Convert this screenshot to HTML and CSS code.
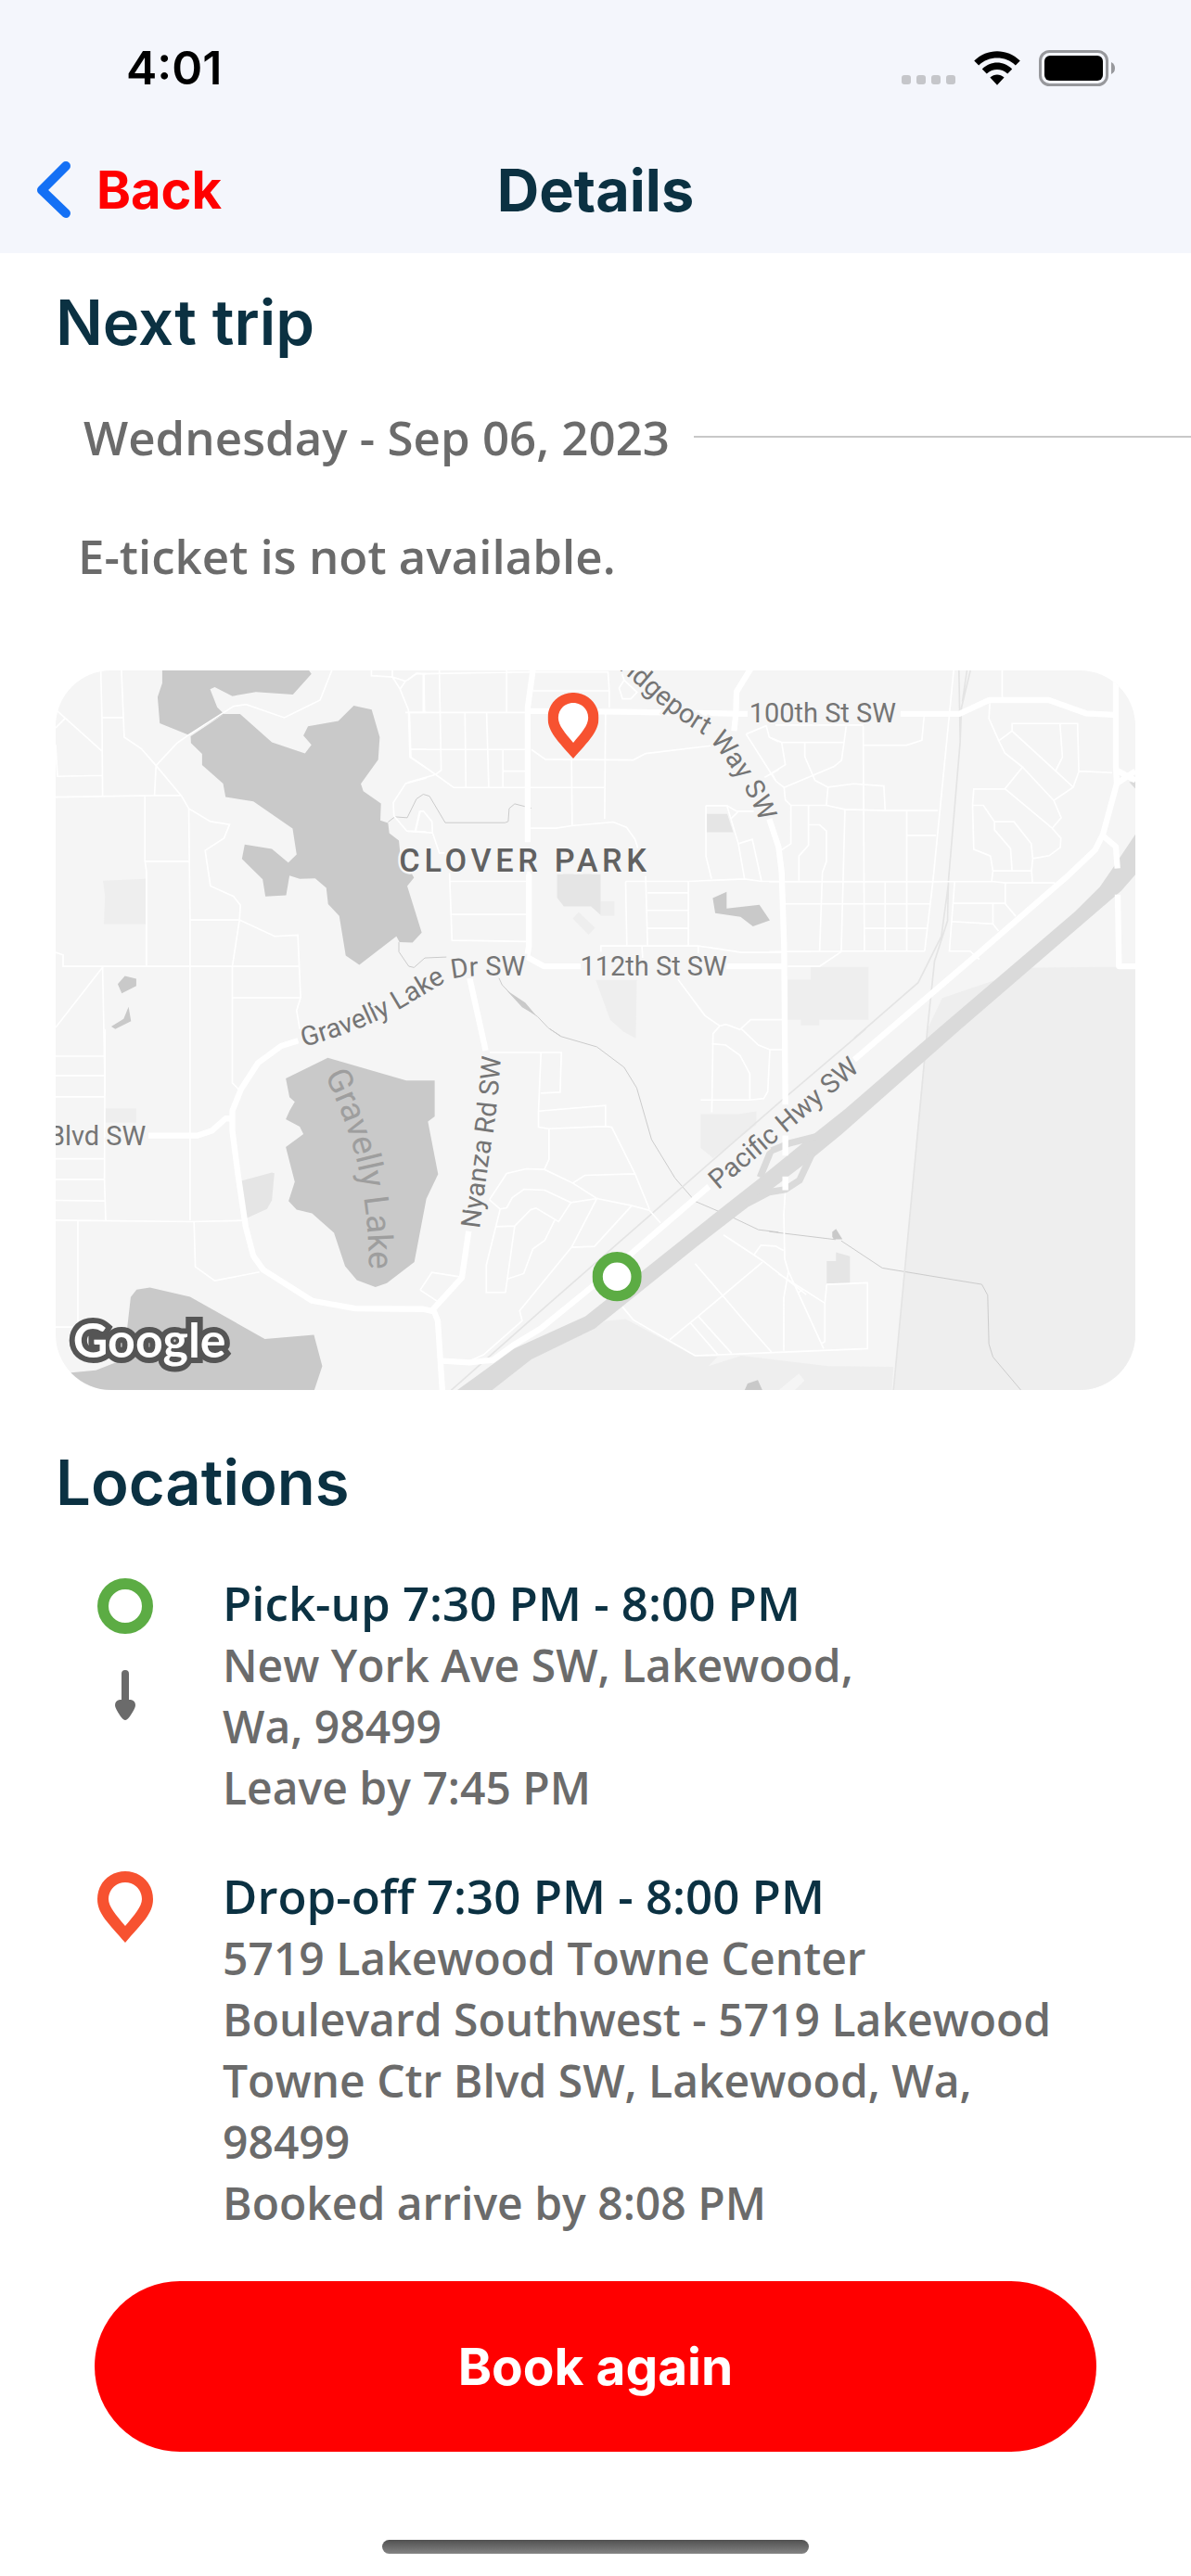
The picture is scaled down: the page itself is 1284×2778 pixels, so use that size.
FILE: index.html
```html
<!DOCTYPE html>
<html lang="en">
<head>
<meta charset="utf-8">
<meta name="viewport" content="width=device-width, initial-scale=1">
<title>Details</title>
<link rel="stylesheet" href="styles.css">
</head>
<body>
<header class="topbar">
  <div class="status">
    <time class="clock">4:01</time>
    <div class="status-icons">
      <svg class="icon-dots" viewBox="0 0 58 10" aria-hidden="true"><g fill="#c5c6ca"><rect width="10" height="10" rx="3"/><rect x="16" width="10" height="10" rx="3"/><rect x="32" width="10" height="10" rx="3"/><rect x="48" width="10" height="10" rx="3"/></g></svg>
      <svg class="icon-wifi" viewBox="0 0 150 112" aria-hidden="true"><path d="M0 32C42-10 108-10 150 32L135 47C102 15 48 15 15 47ZM26 59C54 31 96 31 124 59L109 74C89 56 61 56 41 74ZM52 86C66 74 84 74 98 86L75 111Z"/></svg>
      <svg class="icon-battery" viewBox="0 0 82 39" aria-hidden="true"><rect x="1.500" y="1.500" width="72" height="36" rx="10" fill="none" stroke="#97989c" stroke-width="3"/><rect x="6" y="6" width="63" height="27" rx="6"/><path d="M78 13Q82 15 82 19.500T78 26Z" fill="#97989c"/></svg>
    </div>
  </div>
  <nav class="nav">
    <a class="back" href="#"><svg class="icon-back" viewBox="0 0 36 62" aria-hidden="true"><path d="M31 5L5 31L31 56" fill="none" stroke="#1470f5" stroke-width="10" stroke-linecap="round" stroke-linejoin="round"/></svg>Back</a>
    <h1 class="title">Details</h1>
  </nav>
</header>

<main class="content">
  <h2 class="heading">Next trip</h2>
  <div class="date-row"><p class="date">Wednesday - Sep 06, 2023</p><span class="rule"></span></div>
  <p class="notice">E-ticket is not available.</p>

  <svg class="map" viewBox="0 0 3495 2331" role="img" aria-label="Map of the trip">
    <defs>
      <path id="p-gravelly" d="M-338 1228Q-160 1180-30 1108Q60 1055 130 1012Q170 998 240 998L420 998"/>
      <path id="p-bridge" d="M560-90Q680 0 760 70Q850 155 965 222Q1090 360 1140 500"/>
      <path id="p-nyanza" d="M232 648Q258 440 274 350T304 50"/>
      <path id="p-lake" d="M870 150Q960 330 990 500T1012 850"/>
      <path id="p-pacific" d="M1005 522L1510 94"/>
      <symbol id="pin" viewBox="0 0 165 213"><path fill="#f75230" d="M82.500 0C36 0 0 36 0 81C0 126 32 156 82.500 213C133 156 165 126 165 81C165 36 129 0 82.500 0Z"/><path fill="#fff" d="M82.500 33C55 33 34 54 34 81C34 106 56 130 82.500 162C109 130 131 106 131 81C131 54 110 33 82.500 33Z"/></symbol>
      <symbol id="ring" viewBox="0 0 160 160"><circle cx="80" cy="80" r="63" fill="#fff" stroke="#5cac44" stroke-width="34"/></symbol>
    </defs>
    <rect width="3495" height="2331" fill="#f5f5f5"/>

    <!-- parks and built-up areas -->
    <g fill="#eee">
      <path transform="translate(0 -9)" d="M153 690L292 684V830H156L160 740Z"/>
      <path transform="translate(1140 -9)" d="M624 757h45v46h-45zM553 792L606 842L585 865L534 812ZM608 1011H741L738 1200L700 1180L655 1140Z"/>
      <path transform="translate(2310 -9)" d="M60 1010h74v-41h187v171h-159v18h-60v-18H60z"/>
      <path transform="translate(0 1161)" d="M160 258h101v45H160z"/>
      <path transform="translate(1140 1161)" d="M948 276H1070L1128 267V310L988 418L948 385ZM600 970L640 945L705 939L930 1060L1002 1062L973 1092L1080 1058L1360 1092L1572 1094L1566 1180H260L400 1070Z"/>
      <path transform="translate(2310 1161)" d="M560-100L850-199L1200-202V1180H402L500 100L512 0Z"/>
    </g>
    <g fill="#e5e5e5">
      <path transform="translate(1140 -9)" d="M483 668H624V801L593 773H505L483 745ZM968 474H1034L1053 533H968Z"/>
      <path transform="translate(0 1161)" d="M600 492L700 465L708 467L700 555L684 583L615 614Z"/>
      <path transform="translate(2310 1161)" d="M186 752h30v-29l45 13v88h-75z"/>
    </g>
    <path transform="translate(2310 1161)" fill="#f5f5f5" d="M30 1170L96 1116L114 1138L82 1170Z"/>

    <!-- lakes and ponds -->
    <g fill="#c9c9c9">
      <path transform="translate(0 -9)" d="M345 9V50L330 95L337 180L430 218L545 150L523 128L500 70L515 63L572 92L648 79L768 87L828 20L820 9ZM437 222L545 150H597L700 242L807 278L828 250L802 220L817 190L915 173L965 123L1023 136L1049 225L1044 298L988 376L996 400L1053 440L1051 495L1076 503L1080 536L1111 560L1115 600L1160 680L1138 707L1185 858L1155 890L1113 889L1103 870L983 962L939 932L918 804L882 766L876 713L840 682L790 684L757 673L746 737L679 741L670 685L603 619L612 573L700 587L753 631L780 605L767 521L640 433L550 419L542 375L474 315V279L438 244ZM201 1025L224 998L261 1007V1031L214 1055ZM180 1162L220 1137L236 1098L244 1145L193 1170Z"/>
      <path transform="translate(1140 -9)" d="M987 746L1032 726V780L1138 768L1172 818L1117 838L1077 807L995 795ZM320 1045L370 1100L415 1126L380 1085Z"/>
      <path transform="translate(0 1161)" d="M745 160L881 93L1135 167H1227V283L1205 300L1238 470L1200 550L1161 755L1072 823L1035 836L975 813L937 768L901 660L830 597L780 585L754 557L774 495L745 382L802 340L790 316L745 292L757 265L774 236L757 221ZM0 1113H50L130 1105L220 1070L243 868L262 844L305 837L435 867L677 1004L836 990L863 1092L837 1170H0Z"/>
      <path transform="translate(1140 1161)" d="M1090 1170l10-22l33-11l15 33z"/>
      <path transform="translate(2310 1161)" d="M204 657l12-10l21 34h-28l-5-8z"/>
    </g>

    <!-- creeks -->
    <g fill="none" stroke="#cbcbcb" stroke-width="3">
      <path transform="translate(1140 -9)" d="M-64 500L-42 483L-2 486L28 425L50 410L70 416L121 502H315L325 498L328 456L346 441L400 455M-29 889V920L3 967L20 971L55 940L125 937M295 1005L305 1027L370 1095L420 1130L455 1167L495 1193"/>
      <path transform="translate(1140 1161)" d="M460 0L495 24L612 58L700 124L741 191L789 358L865 483L930 558L1040 605L1135 650L1200 658"/>
      <path transform="translate(2310 1161)" d="M0 656L215 682M233 686L366 774L688 827L707 862L711 1020L724 1062L815 1170"/>
    </g>

    <!-- railways -->
    <g fill="none" stroke="#e4e4e4" stroke-width="5">
      <path transform="translate(2310 -9)" d="M614 9L618 240L580 690L577 820L535 950L512 1170L402 2340M640 9L625 110M651 9L622 130L618 240M580 700L557 870L482 1020L275 1200"/>
      <path transform="translate(1140 1161)" d="M1482 0L1200 240L890 510L445 900L140 1170"/>
    </g>

    <!-- side streets -->
    <g class="street">
      <path transform="translate(0 -9)" d="M146 9L150 162L152 418M213 9L222 225L277 262L325 317L407 415L431 456L501 498L563 508L545 552L484 592L501 707L576 741L598 769L595 817L572 967V1345L592 1365M150 162H218M0 195L30 165M5 140L152 272M0 250L6 352L152 349M0 419L320 414H407M325 317L320 414M325 317L392 245L430 218L576 125L616 119L740 162L856 105L894 9M289 416V625L294 660V967M289 627H434M431 456L435 817V1790M435 817H595L709 870L784 866L793 1068L780 1110L790 1170M572 1069H793M0 922L24 930V967H788M152 970L0 1165M152 970L160 1380M1022 9V26L1090 30V9M1090 30L1132 44L1168 20H1200M1132 44L1115 70L1090 30M1115 70L1142 137L1147 290L1200 325M1190 20V145M1132 145H1200M1147 265H1200M1200 357L1133 375L1093 437L1095 480L1137 529L1200 532M1165 529L1180 466L1190 464"/>
      <path transform="translate(1140 -9)" d="M0 40L28 18L52 20L400 14M52 18L54 145M102 9L108 332L90 346L0 372M320 9V145M0 145H380M185 145L188 388M255 145L262 388M5 145L10 290L90 346L148 388H635M8 265H380M308 265V388M308 335H380M24 529L38 466L50 464L78 498L80 535L102 600H120M0 530L80 535M405 75H652V130M390 14H648L652 75M400 265L445 297L730 299L770 278L980 253M530 297L532 510M640 150L637 490M398 520H480L530 512L665 500L708 517L735 555L745 585M690 9L700 40L684 66L695 101H722L742 80L700 40M135 665L143 883L385 887M137 692H385M143 799H385M705 692L709 900M705 692H908V900M770 675L776 900M776 729H908M776 786H908M776 844H908M625 920V901H940L1080 922H1215M758 901L760 940M940 901V925M908 692L1090 684L1145 692H1215M965 447V610L983 684M965 447H1033L1065 465H1120M1033 447L1070 570L1090 684M1070 570L1115 556L1145 692M1045 490L1068 468M875 1010L962 1127L1010 1160L1030 1155L1075 1172L1110 1140H1215M1010 1160L988 1185L984 1440M1095 215L1160 188L1170 225L1200 240M1095 215L1190 365M1155 355L1200 330"/>
      <path transform="translate(2310 -9)" d="M754 9V100M597 9L530 690L503 918M0 225L40 242H242L249 190M20 186H305M304 190L308 918M304 251H445L494 235L501 160M40 242L52 314L8 342L22 368L48 388L210 320L234 300L242 242M115 245V288L148 365L190 387L185 445M48 388L52 428L70 446H185L245 459L375 463H546M190 387L273 376L371 383L375 460M70 446V570L40 590M127 446V575L96 610V690M127 509H163L185 529V628L172 663L163 918M245 459L233 918M445 463V918M445 543H540M0 693H530L720 692L765 697H925M52 765H522M375 695V918M308 844H510M0 920L233 918H503M233 920L163 967H60M600 695L583 918H650L680 945M595 763H764M764 697V765L798 805M724 765V830L742 853M590 822L724 830M714 115L711 165L743 237L763 277L820 322L763 392L662 393L658 445L662 588L716 610L724 658L720 692M743 237L786 205V181H998L1002 337L984 387L921 430L820 322M786 205L984 387M941 181L949 290L928 332M1002 335L1110 340M763 392L916 520L945 486L921 430M916 520L944 552L942 582L906 609L853 618M658 446H693L729 499H792L848 570L853 618L849 658L852 695M729 499V525L781 586L786 658M724 658H849"/>
      <path transform="translate(0 1161)" d="M0 88H160M0 151H160M0 220H160M0 420H160M0 487H160M0 555L160 557M160 0L158 487L162 620M0 619L440 624L610 620M72 620V965M0 965H72M448 625L452 770L515 815L660 787"/>
      <path transform="translate(1140 1161)" d="M265 76H497L493 205L430 208M431 76L423 266V318L457 323L640 315L660 318L735 468L782 583M423 266L640 248V315M457 323V422L442 455M264 553L320 468L383 453L442 455L534 499L612 549L725 572L782 587L818 628M534 499L573 474L735 469M264 553L299 583L320 579L338 546L376 519L443 522L528 562L612 549L530 707L362 912L370 945L245 1055L200 1075M528 562L488 624L415 580L398 585L346 638L316 853H254V765L299 583M283 640L346 638M475 620L443 685L405 712L375 792L320 810M725 572L604 704L530 707M40 845L78 788L172 803M40 845L100 885M695 900L730 942L930 1058L1200 1047L1488 1035V822L1356 827M984 48L1029 52L1075 85L1107 145V230M948 230H1107L1152 225L1165 203L1172 67M1080 0L1135 52L1172 67H1215M1022 667L1148 750L1290 860M930 760L1018 862L1090 947L1177 1046M1148 755L940 930L848 1006M940 930L1048 1050M915 952L1003 1054M1120 732L1143 700L1190 703L1216 717M1222 525L1217 600L1220 745L1232 785L1346 1035M1232 785L1217 870V1042M1200 792L1350 888M1356 827L1350 888V1012L1337 1020M1263 855L1280 842"/>
    </g>

    <!-- freeway with its ramps -->
    <path transform="translate(1140 1161)" fill="#dadada" d="M2355-630L2285-525L2240-460L2160-380L1715 0L1415 260L1327 330L1130 490L1000 592L575 930L345 1035L152 1175H266L400 1070L605 970L935 705L1060 608L1320 410L1405 340L1790 0L2310-448L2355-500ZM2335-800l20 22v-22z"/>
    <path transform="translate(2310 1161)" fill="none" stroke="#dadada" stroke-width="22" d="M165 345L65 370L5 395L-30 480M140 400L98 490L52 520L0 528L-70 565"/>

    <!-- main roads -->
    <g class="road">
      <path transform="translate(1140 -9)" d="M406 0L388 130V565M392 660V900L386 937L440 967H560M388 140L700 143L1100 150M1112 0L1064 78L1062 150L1056 205M1030 967H1215M200 1005L252 1240"/>
      <path transform="translate(2310 -9)" d="M425 150H615L712 105H905L1025 148L1115 153M0 490L30 580L40 660L48 900L52 1415M1122 40V320L1125 375L1080 540L1055 590L960 680L660 940L275 1270M1120 330L1185 365M1125 375L1185 335M1075 540L1122 580L1127 650M1128 735L1132 967H1190"/>
      <path transform="translate(2310 1161)" d="M52 345V410M52 478V522"/>
      <path transform="translate(0 1161)" d="M785 38L730 55L655 110L600 195L572 265V330L590 470L615 640L640 735L672 780L830 880L970 905L1190 907L1225 915L1237 945L1252 1175M300 345H460L505 330L550 290H572M1215 915L1315 805L1337 655"/>
      <path transform="translate(1140 1161)" d="M975 510L720 730L590 840L430 970L340 1025L275 1072L200 1080L112 1075"/>
    </g>

    <g class="label">
      <text transform="translate(1140 -9)"><textPath href="#p-gravelly">Gravelly Lake Dr SW</textPath></text>
      <text transform="translate(1140 -9)" text-anchor="end"><textPath href="#p-bridge" startOffset="100%">Bridgeport Way SW</textPath></text>
      <text x="1698" y="989">112th St SW</text>
      <text x="2245" y="169">100th St SW</text>
      <text x="292" y="1537" text-anchor="end">Blvd SW</text>
      <text transform="translate(1140 1161)"><textPath href="#p-nyanza">Nyanza Rd SW</textPath></text>
      <text transform="translate(1140 1161)"><textPath href="#p-pacific">Pacific Hwy SW</textPath></text>
    </g>
    <text class="label-lake" transform="translate(0 1161)"><textPath href="#p-lake">Gravelly Lake</textPath></text>
    <text class="label-area" x="1112" y="651">CLOVER PARK</text>
    <text class="label-google" x="56" y="2226">Google</text>

    <use href="#pin" x="1593" y="72" width="165" height="213"/>
    <use href="#ring" x="1737" y="1883" width="160" height="160"/>
  </svg>

  <h2 class="heading heading-locations">Locations</h2>
  <ol class="stops">
    <li class="stop">
      <div class="marker">
        <svg class="marker-ring" viewBox="0 0 60 60" aria-hidden="true"><circle cx="30" cy="30" r="24" fill="none" stroke="#5cac44" stroke-width="12"/></svg>
        <svg class="marker-arrow" viewBox="0 0 24 54" aria-hidden="true"><path fill="#6b6b6b" d="M8 4Q8 0 12 0T16 4V32H18Q23 33 23 38Q23 41 17 50Q14 54 12 54T7 50Q1 41 1 38Q1 33 6 32H8Z"/></svg>
      </div>
      <div class="stop-text">
        <h3 class="stop-title">Pick-up 7:30 PM - 8:00 PM</h3>
        <p class="stop-line">New York Ave SW, Lakewood,<br>Wa, 98499</p>
        <p class="stop-line">Leave by 7:45 PM</p>
      </div>
    </li>
    <li class="stop">
      <div class="marker">
        <svg class="marker-pin" viewBox="0 0 60 77" aria-hidden="true"><path fill="#f75230" fill-rule="evenodd" d="M30 0C13 0 0 13 0 30C0 46 12 56 30 77C48 56 60 46 60 30C60 13 47 0 30 0ZM30 12C40 12 48 20 48 30C48 38 40 47 30 59C20 47 12 38 12 30C12 20 20 12 30 12Z"/></svg>
      </div>
      <div class="stop-text">
        <h3 class="stop-title">Drop-off 7:30 PM - 8:00 PM</h3>
        <p class="stop-line">5719 Lakewood Towne Center Boulevard Southwest - 5719 Lakewood Towne Ctr Blvd SW, Lakewood, Wa, 98499</p>
        <p class="stop-line">Booked arrive by 8:08 PM</p>
      </div>
    </li>
  </ol>
  <button class="book" type="button">Book again</button>
</main>
<div class="home-bar"></div>
</body>
</html>
```
FILE: styles.css
```css
* { box-sizing: border-box; }

body {
  margin: 0;
  min-height: 100vh;
  display: flex;
  flex-direction: column;
  background: #fff;
  color: #6b6b6b;
  font-family: "Open Sans", "Noto Sans", sans-serif;
}

h1, h2, h3, p, ol { margin: 0; padding: 0; }
svg { display: block; }

.topbar {
  background: #f4f6fc;
  font-family: Inter, sans-serif;
  padding-bottom: 32px;
}

.status {
  display: flex;
  justify-content: space-between;
  align-items: center;
  height: 144px;
  padding: 2px 82px 0 136px;
}

.clock { color: #000; font-size: 50px; font-weight: 600; }
.status-icons { display: flex; align-items: center; gap: 20px; }
.icon-dots { width: 58px; height: 10px; margin-top: 26px; }
.icon-wifi { width: 50px; height: 37px; }
.icon-battery { width: 82px; height: 39px; }

.nav {
  display: grid;
  grid-template-columns: 1fr auto 1fr;
  align-items: center;
  height: 97px;
  padding: 25px 40px 0;
}

.back {
  display: flex;
  align-items: center;
  gap: 28px;
  color: #f00;
  font-size: 56px;
  font-weight: 700;
  line-height: 64px;
  text-decoration: none;
}
.icon-back { width: 36px; height: 62px; }
.title { color: #0b3142; font-size: 63px; font-weight: 700; line-height: 64px; }

.content { display: flex; flex-direction: column; padding: 33px 60px 0; }

.heading {
  color: #0b3142;
  font-family: Inter, sans-serif;
  font-size: 67px;
  font-weight: 600;
  line-height: 84px;
}
.heading-locations { margin-top: 58px; }

.date-row {
  display: flex;
  align-items: center;
  gap: 26px;
  margin: 46px -60px 0 30px;
}
.date, .notice { font-size: 51px; font-weight: 600; line-height: 70px; }
.rule { flex: 1; height: 2px; background: #c8c8c8; }
.notice { margin: 58px 0 0 24px; }

.map { width: 100%; margin-top: 89px; border-radius: 60px; }
.street { fill: none; stroke: #fff; stroke-width: 5; }
.road { fill: none; stroke: #fff; stroke-width: 19; stroke-linejoin: round; }

.label {
  fill: #757575;
  stroke: #f5f5f5;
  stroke-width: 14px;
  paint-order: stroke;
  font-family: Roboto, sans-serif;
  font-size: 87px;
}
.label-lake { fill: #9e9e9e; font-family: Roboto, sans-serif; font-size: 111px; }
.label-area {
  fill: #616161;
  stroke: #f5f5f5;
  stroke-width: 16px;
  paint-order: stroke;
  font-family: Roboto, sans-serif;
  font-size: 103px;
  font-weight: 500;
  letter-spacing: 14px;
}
.label-google {
  fill: #fff;
  stroke: #555;
  stroke-width: 36px;
  paint-order: stroke;
  font-family: Lato, sans-serif;
  font-size: 156px;
  font-weight: 700;
}

.stops {
  display: flex;
  flex-direction: column;
  gap: 48px;
  margin-top: 52px;
  list-style: none;
}
.stop { display: flex; gap: 75px; padding: 0 60px 0 45px; }
.marker { flex: none; display: flex; flex-direction: column; align-items: center; gap: 39px; padding-top: 9px; }
.marker-ring { width: 60px; height: 60px; }
.marker-arrow { width: 24px; height: 54px; }
.marker-pin { width: 60px; height: 77px; }
.stop-title { color: #0b3142; font-size: 51px; font-weight: 600; line-height: 70px; }
.stop-line { font-size: 48px; font-weight: 600; line-height: 66px; }

.book {
  margin: 51px 42px 0;
  height: 184px;
  border: 0;
  border-radius: 92px;
  background: #f00;
  color: #fff;
  font-family: Inter, sans-serif;
  font-size: 55px;
  font-weight: 700;
}

.home-bar {
  width: 460px;
  height: 15px;
  margin: auto auto 24px;
  border-radius: 8px;
  background: linear-gradient(#505050, #848484);
}
```
